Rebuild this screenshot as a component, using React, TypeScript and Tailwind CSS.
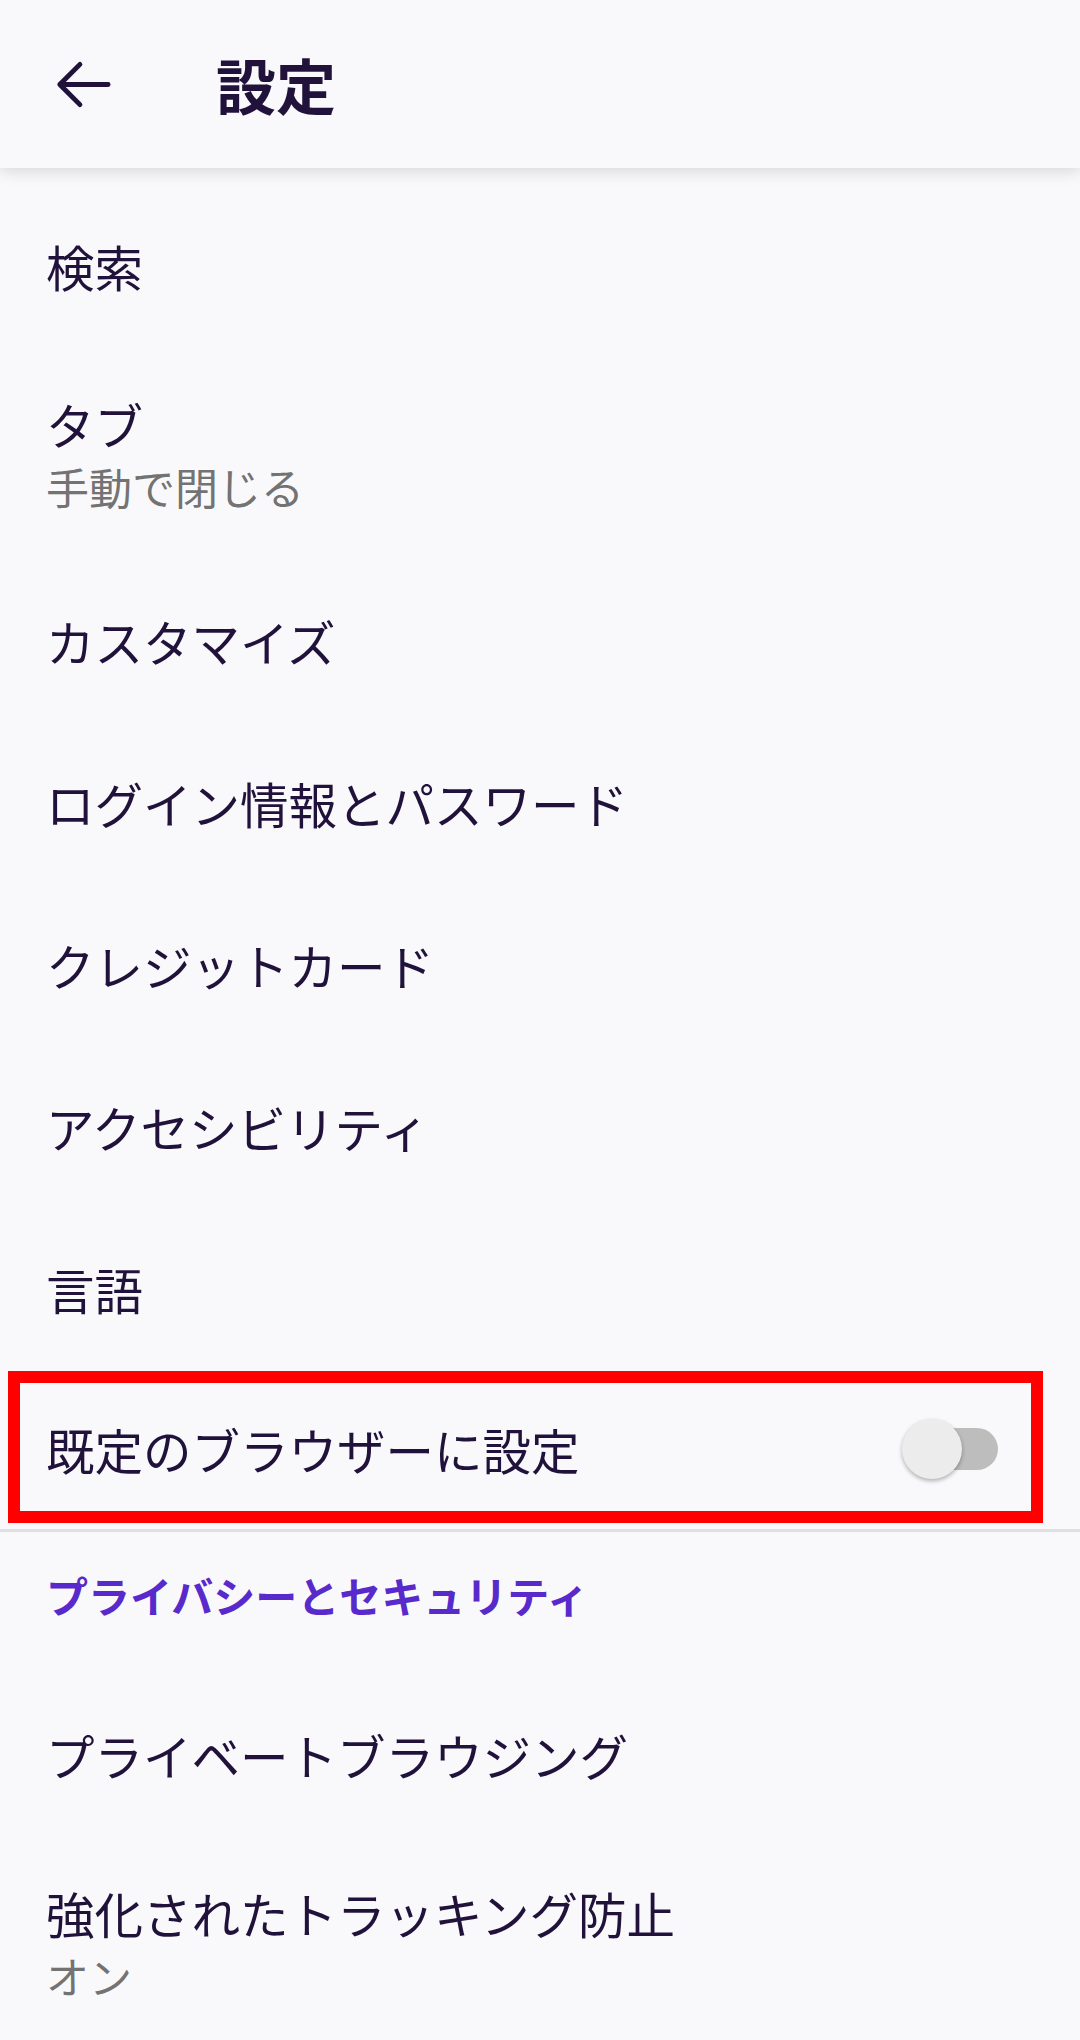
import React from 'react';

const ink = 'text-[#20123a]';

function Row({ title, sub, h }: { title: string; sub?: string; h: string }) {
  return (
    <div className={`${h} flex flex-col justify-center pl-[46px]`}>
      <div className={`text-[48.5px] leading-[66px] ${ink}`}>{title}</div>
      {sub && <div className="text-[43px] leading-[58px] text-[#737373]">{sub}</div>}
    </div>
  );
}

function Toggle() {
  return (
    <div className="relative w-[96px] h-[60px]">
      <div className="absolute right-0 top-[9px] w-[92px] h-[42px] rounded-full bg-[#bdbdbd]" />
      <div className="absolute left-0 top-0 w-[60px] h-[60px] rounded-full bg-[#ececec] shadow-[0_2px_4px_rgba(0,0,0,0.3)]" />
    </div>
  );
}

export default function App() {
  return (
    <div className="w-[1080px] h-[2040px] overflow-hidden bg-[#f9f9fb] font-['Noto_Sans_CJK_JP',sans-serif]">
      {/* app bar */}
      <header className="relative z-10 h-[168px] bg-[#f9f9fb] flex items-center shadow-[0_4px_14px_rgba(0,0,0,0.13)]">
        <div className="w-[69px] h-[69px] ml-[46px]">
          <svg viewBox="0 0 24 24" width="69" height="69" fill="none" stroke="#20123a" strokeWidth="1.7" strokeLinecap="round" strokeLinejoin="round">
            <path d="M21.6 12H4.8M11.8 5L4.8 12L11.8 19" />
          </svg>
        </div>
        <h1 className={`ml-[101px] text-[60px] leading-none font-bold ${ink}`}>設定</h1>
      </header>

      <div className="pt-[17px]">
        <Row title="検索" h="h-[161px]" />
        <Row title="タブ" sub="手動で閉じる" h="h-[214px]" />
        <Row title="カスタマイズ" h="h-[162px]" />
        <Row title="ログイン情報とパスワード" h="h-[162px]" />
        <Row title="クレジットカード" h="h-[162px]" />
        <Row title="アクセシビリティ" h="h-[162px]" />
        <Row title="言語" h="h-[161px]" />

        {/* default browser row, highlighted */}
        <div className="relative h-[160px] flex items-center justify-between pl-[46px] pr-[82px]">
          <div className={`text-[48.5px] leading-[66px] ${ink}`}>既定のブラウザーに設定</div>
          <Toggle />
          <div className="absolute left-[8px] top-[2px] w-[1035px] h-[152px] border-[12px] border-[#ff0000]" />
        </div>
        <div className="h-[3px] bg-[#e0e0e3]" />

        <div className="h-[142px] pl-[46px] pt-[38px]">
          <div className="text-[42px] leading-[50px] font-bold text-[#592acb]">プライバシーとセキュリティ</div>
        </div>
        <Row title="プライベートブラウジング" h="h-[161px]" />
        <Row title="強化されたトラッキング防止" sub="オン" h="h-[214px]" />
      </div>
    </div>
  );
}
